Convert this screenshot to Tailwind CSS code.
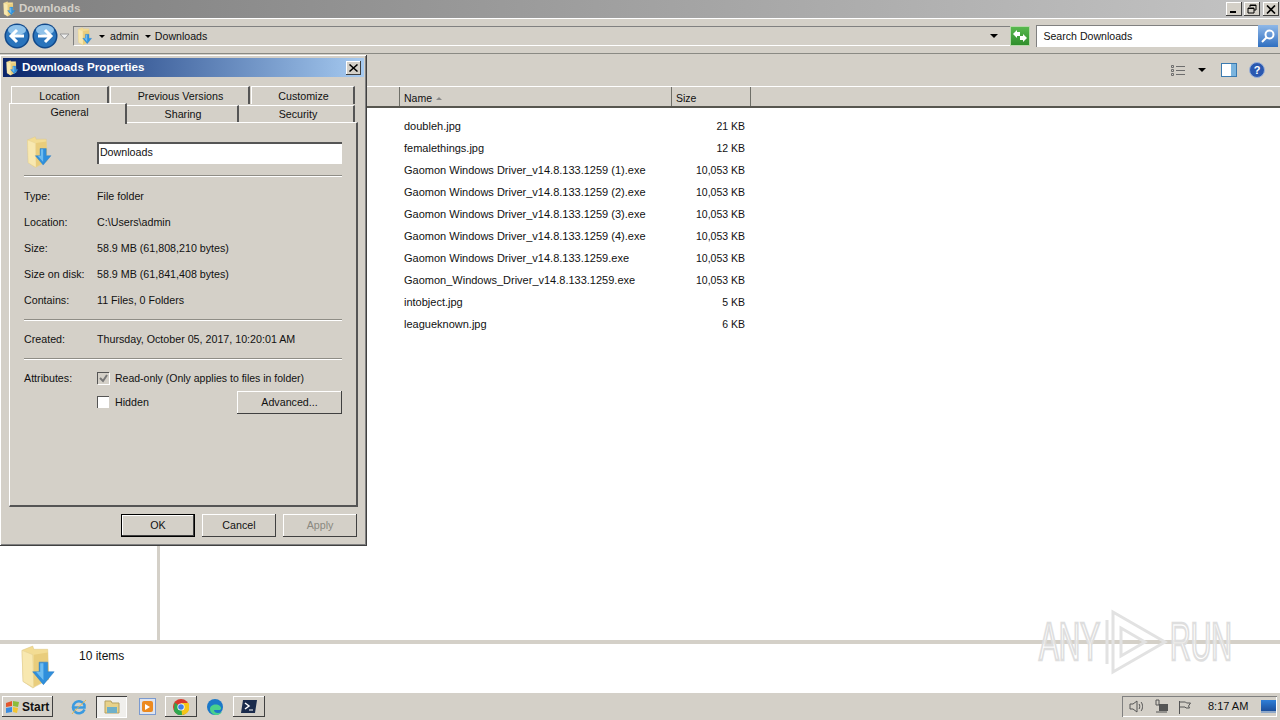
<!DOCTYPE html>
<html lang="en">
<head>
    <meta charset="UTF-8">
    <title>Downloads</title>
    <script src="https://cdn.jsdelivr.net/npm/@tailwindcss/browser@4"></script>
</head>
<body class="relative w-[1280px] h-[720px] overflow-hidden bg-white text-[11px] leading-none text-[#111] font-['Liberation_Sans',sans-serif]">
    <svg class="hidden">
        <symbol id="dl-folder" viewBox="0 0 32 42">
            <path d="M2 5 L12 1 L13 4 L26 4 L27 32 L12 40 L3 34 Z" fill="#f3dc93" stroke="#dcc685" stroke-width="0.5"/>
            <path d="M2 5 L12 9 L13 40 L3 34 Z" fill="#f8e8b0" stroke="#e3cf92" stroke-width="0.5"/>
            <path d="M13 9 L26 7 L27 32 L13 39 Z" fill="#e9cd7c"/>
            <path d="M18 16 L26 16 L26 25 L32 25 L22 37 L12 25 L18 25 Z" fill="#2f8fdc" stroke="#2a7cc4" stroke-width="0.5"/>
            <path d="M19 17 L22 17 L22 33 L15 25 L19 25 Z" fill="#6dbcf0"/>
        </symbol>
        <symbol id="nav-btn" viewBox="0 0 26 26">
            <circle cx="13" cy="13" r="12.5" fill="#12498a"/>
            <circle cx="13" cy="13" r="11" fill="#2a74bc"/>
            <ellipse cx="13" cy="7" rx="9" ry="5" fill="#8fc2ea"/>
        </symbol>
    </svg>

    <div class="flex flex-col h-full">
        <!-- title bar -->
        <div class="h-[18px] flex items-center justify-between bg-gradient-to-r from-[#808080] to-[#c4c4c4] pl-[2px] pr-[1px]">
            <div class="flex items-center gap-[3px]">
                <svg class="w-[14px] h-[16px]"><use href="#dl-folder"/></svg>
                <span class="font-bold text-[#d4d0c8] text-[11.5px]">Downloads</span>
            </div>
            <div class="flex gap-[2px]">
                <div class="w-[16px] h-[14px] bg-[#d4d0c8] shadow-[inset_-1px_-1px_0_#404040,inset_1px_1px_0_#fff] relative"><div class="absolute left-[4px] bottom-[3px] w-[6px] h-[2px] bg-black"></div></div>
                <div class="w-[16px] h-[14px] bg-[#d4d0c8] shadow-[inset_-1px_-1px_0_#404040,inset_1px_1px_0_#fff] flex items-center justify-center">
                    <svg class="w-[10px] h-[10px]" viewBox="0 0 10 10" fill="none" stroke="#000"><path d="M3 3V1h6v5H7M1 4h6v5H1zM1 4.5h6M3 1.5h6"/></svg>
                </div>
                <div class="w-[16px] h-[14px] ml-[1px] bg-[#d4d0c8] shadow-[inset_-1px_-1px_0_#404040,inset_1px_1px_0_#fff] flex items-center justify-center">
                    <svg class="w-[10px] h-[9px]" viewBox="0 0 10 9" stroke="#000" stroke-width="1.6"><path d="M1 0.5l8 8M9 0.5l-8 8"/></svg>
                </div>
            </div>
        </div>

        <!-- nav bar -->
        <div class="h-[36px] bg-[#d4d0c8] border-t border-t-white border-b border-b-[#8a8a84] flex items-center pl-[4px] pr-[2px] text-[10.6px]">
            <div class="relative w-[26px] h-[26px]">
                <svg class="w-[26px] h-[26px]"><use href="#nav-btn"/></svg>
                <svg class="absolute inset-0 w-[26px] h-[26px]" viewBox="0 0 26 26" fill="none" stroke="#fff" stroke-width="3"><path d="M20 13H8M13 7l-6 6 6 6"/></svg>
            </div>
            <div class="relative w-[26px] h-[26px] ml-[2px]">
                <svg class="w-[26px] h-[26px]"><use href="#nav-btn"/></svg>
                <svg class="absolute inset-0 w-[26px] h-[26px]" viewBox="0 0 26 26" fill="none" stroke="#fff" stroke-width="3"><path d="M6 13h12M13 7l6 6-6 6"/></svg>
            </div>
            <svg class="w-[11px] h-[7px] ml-[1px]" viewBox="0 0 11 7" fill="#eee" stroke="#999"><path d="M1 1h9L5.500 6z"/></svg>
            <div class="ml-[3px] w-[947px] h-[20px] flex items-center border-l border-t border-l-[#808080] border-t-[#808080] border-b border-b-white pl-[2px]">
                <svg class="w-[17px] h-[19px]"><use href="#dl-folder"/></svg>
                <div class="ml-[6px] w-0 h-0 border-x-[3px] border-x-transparent border-t-[3px] border-t-black"></div>
                <span class="ml-[5px]">admin</span>
                <div class="ml-[6px] w-0 h-0 border-x-[3px] border-x-transparent border-t-[3px] border-t-black"></div>
                <span class="ml-[4px]">Downloads</span>
                <div class="ml-auto mr-[20px] w-0 h-0 border-x-[4px] border-x-transparent border-t-[4px] border-t-black"></div>
            </div>
            <div class="w-[20px] h-[20px] -ml-[8px] bg-gradient-to-b from-[#58b84e] to-[#2f8f2c] border border-[#b5d9a9] flex items-center justify-center">
                <svg class="w-[14px] h-[12px]" viewBox="0 0 14 12" fill="#fff"><path d="M0 4l4-4v2h3v4H4v2zM14 8l-4 4v-2H7V6h3V4z"/></svg>
            </div>
            <div class="ml-[6px] w-[222px] h-[22px] bg-white border-t border-l border-[#808080] flex items-center pl-[6px]">Search Downloads</div>
            <div class="w-[20px] h-[22px] bg-gradient-to-b from-[#8fb8e8] to-[#2f6fc0] flex items-center justify-center">
                <svg class="w-[16px] h-[16px]" viewBox="0 0 16 16" fill="none" stroke="#fff" stroke-width="2"><circle cx="9.500" cy="6.500" r="4"/><path d="M6.500 9.500L2 14"/></svg>
            </div>
        </div>

        <!-- command bar -->
        <div class="h-[32px] bg-[#d4d0c8] flex items-center justify-end pr-[15px]">
            <svg class="w-[16px] h-[12px] mr-[12px]" viewBox="0 0 16 12" fill="none" stroke="#6d6d6d"><path d="M1.500 1.500h2v2h-2zM1.500 5.500h2v2h-2zM1.500 9.500h2v2h-2zM6 2.500h9M6 6.500h9M6 10.500h9"/></svg>
            <div class="w-0 h-0 mr-[15px] border-x-[4px] border-x-transparent border-t-[4px] border-t-black"></div>
            <div class="w-[16px] h-[14px] mr-[12px] bg-white border border-[#3a7ab0] flex justify-end"><div class="w-[5px] h-full bg-[#7ab4de]"></div></div>
            <div class="w-[16px] h-[16px] rounded-full bg-[#2a58b0] border border-[#9ab0d8] flex items-center justify-center text-white font-bold text-[11px]">?</div>
        </div>

        <!-- panes -->
        <div class="flex-1 flex min-h-0">
            <div class="w-[157px] bg-white"></div>
            <div class="w-[3px] bg-[#d4d0c8]"></div>
            <div class="flex-1 flex flex-col">
                <div class="h-[22px] bg-[#d4d0c8] border-t border-t-white border-b-[2px] border-b-[#57564f] flex items-center pl-[239px] text-[10.5px]">
                    <div class="w-[272px] h-full flex items-center border-l border-l-[#6f6f68] pl-[4px] pt-[4px]">Name
                        <div class="ml-[4px] w-0 h-0 border-x-[3px] border-x-transparent border-b-[3px] border-b-[#888]"></div>
                    </div>
                    <div class="w-[80px] h-full flex items-center border-l border-r border-x-[#6f6f68] pl-[4px] pt-[4px]">Size</div>
                </div>
                <div class="pt-[7px] pl-[244px]">
                    <div class="flex items-center h-[22px]"><span class="w-[267px]">doubleh.jpg</span><span class="w-[74px] text-right text-[10.5px]">21 KB</span></div>
                    <div class="flex items-center h-[22px]"><span class="w-[267px]">femalethings.jpg</span><span class="w-[74px] text-right text-[10.5px]">12 KB</span></div>
                    <div class="flex items-center h-[22px]"><span class="w-[267px]">Gaomon Windows Driver_v14.8.133.1259 (1).exe</span><span class="w-[74px] text-right text-[10.5px]">10,053 KB</span></div>
                    <div class="flex items-center h-[22px]"><span class="w-[267px]">Gaomon Windows Driver_v14.8.133.1259 (2).exe</span><span class="w-[74px] text-right text-[10.5px]">10,053 KB</span></div>
                    <div class="flex items-center h-[22px]"><span class="w-[267px]">Gaomon Windows Driver_v14.8.133.1259 (3).exe</span><span class="w-[74px] text-right text-[10.5px]">10,053 KB</span></div>
                    <div class="flex items-center h-[22px]"><span class="w-[267px]">Gaomon Windows Driver_v14.8.133.1259 (4).exe</span><span class="w-[74px] text-right text-[10.5px]">10,053 KB</span></div>
                    <div class="flex items-center h-[22px]"><span class="w-[267px]">Gaomon Windows Driver_v14.8.133.1259.exe</span><span class="w-[74px] text-right text-[10.5px]">10,053 KB</span></div>
                    <div class="flex items-center h-[22px]"><span class="w-[267px]">Gaomon_Windows_Driver_v14.8.133.1259.exe</span><span class="w-[74px] text-right text-[10.5px]">10,053 KB</span></div>
                    <div class="flex items-center h-[22px]"><span class="w-[267px]">intobject.jpg</span><span class="w-[74px] text-right text-[10.5px]">5 KB</span></div>
                    <div class="flex items-center h-[22px]"><span class="w-[267px]">leagueknown.jpg</span><span class="w-[74px] text-right text-[10.5px]">6 KB</span></div>
                </div>
            </div>
        </div>

        <!-- details pane -->
        <div class="h-[52px] border-t-[4px] border-t-[#d4d0c8] flex">
            <svg class="w-[36px] h-[45px] ml-[19px] mt-[1px]"><use href="#dl-folder"/></svg>
            <span class="ml-[24px] mt-[6px] text-[12px]">10 items</span>
        </div>

        <!-- taskbar -->
        <div class="h-[28px] bg-[#d4d0c8] border-t border-t-white flex items-center pl-[2px] pr-[3px]">
            <div class="w-[51px] h-[21px] flex items-center pl-[3px] gap-[2px] font-bold text-[12px] shadow-[inset_-1px_-1px_0_#404040,inset_1px_1px_0_#fff]">
                <svg class="w-[15px] h-[14px]" viewBox="0 0 15 14"><path d="M1 3l6-2v5l-6 1z" fill="#e2562c"/><path d="M8 1l6 1-1 5-5-1z" fill="#8cbc3c"/><path d="M1 8l6-1v5l-6 1z" fill="#3a8ce0"/><path d="M8 7l5 1-1 5-4-1z" fill="#f3c531"/></svg>
                Start
            </div>
            <svg class="w-[18px] h-[18px] ml-[17px]" viewBox="0 0 18 18" fill="none"><path d="M14.500 11.500A6 6 0 1 1 14.500 7L14.500 9.500H4" stroke="#3a9ae0" stroke-width="2.500"/><path d="M2 16C4 13 13 5 16 2" stroke="#e8b84a"/></svg>
            <div class="w-[31px] h-[22px] ml-[8px] flex items-center justify-center bg-[#f0efec] shadow-[inset_1px_1px_0_#404040,inset_-1px_-1px_0_#fff]">
                <svg class="w-[16px] h-[14px]" viewBox="0 0 16 14"><path d="M1 1h6l1 2h7v10H1z" fill="#e8d28a" stroke="#b5a060"/><path d="M3 7h10v6H3z" fill="#6fb0c8"/></svg>
            </div>
            <div class="w-[17px] h-[17px] ml-[12px] bg-[#dfe4ee] border border-[#7a9ad0] flex items-center justify-center">
                <div class="w-[11px] h-[11px] rounded-[2px] bg-[#ec8a20] flex items-center justify-center"><div class="w-0 h-0 border-y-[3px] border-y-transparent border-l-[5px] border-l-white"></div></div>
            </div>
            <div class="w-[32px] h-[21px] ml-[9px] flex items-center justify-center shadow-[inset_-1px_-1px_0_#404040,inset_1px_1px_0_#fff]">
                <svg class="w-[16px] h-[16px]" viewBox="0 0 16 16"><circle cx="8" cy="8" r="8" fill="#d8392b"/><path d="M8 8L15 12A8 8 0 0 1 4 15z" fill="#2fa84f"/><path d="M8 8L1.500 3.500L1 12A8 8 0 0 0 8 16z" fill="#2fa84f"/><path d="M8 4h7.500A8 8 0 0 1 9 16z" fill="#f5c518"/><circle cx="8" cy="8" r="3.600" fill="#fff"/><circle cx="8" cy="8" r="2.800" fill="#3f7fe8"/></svg>
            </div>
            <svg class="w-[16px] h-[16px] ml-[10px]" viewBox="0 0 16 16"><circle cx="8" cy="8" r="8" fill="#1b78c8"/><path d="M3 10c0-4 6-6 10-3 2 2 1 4-1 4H7c0 3 4 4 8 2-2 3-6 4-9 2-2-1-3-3-3-5z" fill="#49d08c"/></svg>
            <div class="w-[32px] h-[21px] ml-[10px] flex items-center justify-center shadow-[inset_-1px_-1px_0_#404040,inset_1px_1px_0_#fff]">
                <svg class="w-[16px] h-[13px]" viewBox="0 0 16 13"><path d="M2 0h14l-2 13H0z" fill="#1a2b4c"/><path d="M4 3l4 3-4 3" fill="none" stroke="#fff" stroke-width="1.500"/><path d="M8 10h4" stroke="#fff"/></svg>
            </div>
            <div class="ml-auto w-[155px] h-[21px] flex items-center pl-[7px] shadow-[inset_1px_1px_0_#808080,inset_-1px_-1px_0_#fff]">
                <svg class="w-[15px] h-[15px]" viewBox="0 0 15 15" fill="none" stroke="#555"><path d="M1 5h3l4-3v11l-4-3H1zM10 5c1 1 1 4 0 5M12 3c2 2 2 7 0 9"/></svg>
                <svg class="w-[16px] h-[15px] ml-[9px]" viewBox="0 0 16 15"><path d="M3 1h3v5H3z" fill="none" stroke="#555"/><path d="M6 5h9v7H6z" fill="#555"/><path d="M3 13h11" stroke="#555"/></svg>
                <svg class="w-[14px] h-[14px] ml-[9px]" viewBox="0 0 14 14" fill="none" stroke="#555"><path d="M1.500 1v13M1.500 2h6l1 1h4l-2 3 1 2H8L7 7H1.500"/></svg>
                <span class="ml-[16px] w-[42px] text-[11px] whitespace-nowrap">8:17 AM</span>
                <div class="ml-[11px] w-[15px] h-[13px] bg-gradient-to-b from-[#2f7fd8] to-[#1c4f9c] border-b-[2px] border-b-[#8fa8c8]"></div>
            </div>
        </div>
    </div>

    <!-- watermark over the window -->
    <svg class="absolute left-[1035px] top-[606px] w-[200px] h-[72px]" viewBox="0 0 200 72" fill="#fff" fill-opacity="0.65" stroke="#dedede" stroke-width="2.200">
        <text transform="translate(4 54) scale(0.56 1)" vector-effect="non-scaling-stroke" font-family="Liberation Sans" font-size="53">ANY</text>
        <path d="M72 14v44M78 6v60l52-30zM86 22v28l24-14z" fill="none" stroke-width="3" stroke="#e2e2e2"/>
        <text transform="translate(135 54) scale(0.54 1)" vector-effect="non-scaling-stroke" font-family="Liberation Sans" font-size="53">RUN</text>
    </svg>

    <!-- properties dialog -->
    <div class="absolute left-0 top-[55px] w-[367px] h-[491px] bg-[#d4d0c8] shadow-[inset_-1px_-1px_0_#404040,inset_1px_1px_0_#fff,inset_-2px_-2px_0_#808080] p-[3px] text-[10.7px]">
        <div class="h-[19px] flex items-center justify-between pl-[2px] pr-[3px] bg-gradient-to-r from-[#0a246a] to-[#a6caf0]">
            <div class="flex items-center gap-[3px]">
                <svg class="w-[14px] h-[16px]"><use href="#dl-folder"/></svg>
                <span class="font-bold text-white text-[11.6px] pb-[2px]">Downloads Properties</span>
            </div>
            <div class="w-[15px] h-[14px] bg-[#d4d0c8] shadow-[inset_-1px_-1px_0_#404040,inset_1px_1px_0_#fff] flex items-center justify-center">
                <svg class="w-[9px] h-[8px]" viewBox="0 0 9 8" stroke="#000" stroke-width="1.500"><path d="M0.500 0.500l8 7M8.500 0.500l-8 7"/></svg>
            </div>
        </div>

        <!-- tabs -->
        <div class="mt-[9px] ml-[8px] flex h-[18px] gap-[1px]">
            <div class="w-[98px] pt-[2px] flex items-center justify-center border-t border-l border-t-white border-l-white border-r-[2px] border-r-[#555]">Location</div>
            <div class="w-[140px] pt-[2px] pl-[2px] flex items-center justify-center border-t border-l border-t-white border-l-white border-r-[2px] border-r-[#555]">Previous Versions</div>
            <div class="w-[104px] pt-[2px] pl-[2px] flex items-center justify-center border-t border-l border-t-white border-l-white border-r-[2px] border-r-[#555]">Customize</div>
        </div>
        <div class="ml-[6px] flex h-[19px] -mt-[1px] relative z-10">
            <div class="w-[118px] h-[21px] pl-[4px] bg-[#d4d0c8] flex items-center justify-center pb-[4px] border-t border-l border-t-white border-l-white border-r-[2px] border-r-[#555]">General</div>
            <div class="w-[112px] mt-[2px] h-[17px] pl-[2px] flex items-center justify-center border-t border-t-white border-r-[2px] border-r-[#555]">Sharing</div>
            <div class="w-[116px] mt-[2px] h-[17px] pl-[4px] flex items-center justify-center border-t border-t-white border-r-[2px] border-r-[#555]">Security</div>
        </div>

        <!-- panel -->
        <div class="ml-[6px] w-[349px] h-[385px] border-t border-l border-t-white border-l-white border-r-[2px] border-b-[2px] border-r-[#555] border-b-[#555] pl-[14px] pr-[14px]">
            <div class="flex h-[52px] items-start">
                <svg class="w-[29px] h-[33px] mt-[13px]"><use href="#dl-folder"/></svg>
                <div class="ml-[44px] mt-[19px] w-[246px] h-[22px] bg-white border-t-2 border-l-2 border-t-[#555] border-l-[#555] flex items-center pl-[1px] pb-[3px]">Downloads</div>
            </div>
            <div class="border-t border-t-[#8f8d86] border-b border-b-white"></div>
            <div class="mt-[6px] flex h-[26px] items-center"><span class="w-[73px]">Type:</span><span>File folder</span></div>
            <div class="flex h-[26px] items-center"><span class="w-[73px]">Location:</span><span>C:\Users\admin</span></div>
            <div class="flex h-[26px] items-center"><span class="w-[73px]">Size:</span><span>58.9 MB (61,808,210 bytes)</span></div>
            <div class="flex h-[26px] items-center"><span class="w-[73px]">Size on disk:</span><span>58.9 MB (61,841,408 bytes)</span></div>
            <div class="flex h-[26px] items-center"><span class="w-[73px]">Contains:</span><span>11 Files, 0 Folders</span></div>
            <div class="mt-[6px] border-t border-t-[#8f8d86] border-b border-b-white"></div>
            <div class="mt-[5px] flex h-[26px] items-center"><span class="w-[73px]">Created:</span><span>Thursday, October 05, 2017, 10:20:01 AM</span></div>
            <div class="mt-[6px] border-t border-t-[#8f8d86] border-b border-b-white"></div>
            <div class="mt-[6px] flex h-[24px] items-center">
                <span class="w-[73px]">Attributes:</span>
                <div class="w-[12px] h-[12px] bg-[#d4d0c8] border-t border-l border-[#555] shadow-[1px_1px_0_#fff] flex items-center justify-center">
                    <svg class="w-[9px] h-[9px]" viewBox="0 0 9 9" fill="none" stroke="#777" stroke-width="2"><path d="M1 4l3 3 4-6"/></svg>
                </div>
                <span class="ml-[6px] text-[10.5px]">Read-only (Only applies to files in folder)</span>
            </div>
            <div class="flex h-[24px] items-center">
                <div class="ml-[73px] w-[12px] h-[12px] bg-white border-t border-l border-[#555] shadow-[1px_1px_0_#d4d0c8]"></div>
                <span class="ml-[6px]">Hidden</span>
                <div class="ml-auto w-[105px] h-[23px] flex items-center justify-center shadow-[inset_-1px_-1px_0_#404040,inset_1px_1px_0_#fff]">Advanced...</div>
            </div>
        </div>

        <!-- dialog buttons -->
        <div class="mt-[7px] pl-[118px] flex gap-[7px] h-[23px]">
            <div class="w-[74px] border border-black flex items-center justify-center shadow-[inset_-1px_-1px_0_#404040,inset_1px_1px_0_#fff]">OK</div>
            <div class="w-[74px] flex items-center justify-center shadow-[inset_-1px_-1px_0_#404040,inset_1px_1px_0_#fff]">Cancel</div>
            <div class="w-[74px] flex items-center justify-center text-[#8a8880] shadow-[inset_-1px_-1px_0_#404040,inset_1px_1px_0_#fff]">Apply</div>
        </div>
    </div>
</body>
</html>
